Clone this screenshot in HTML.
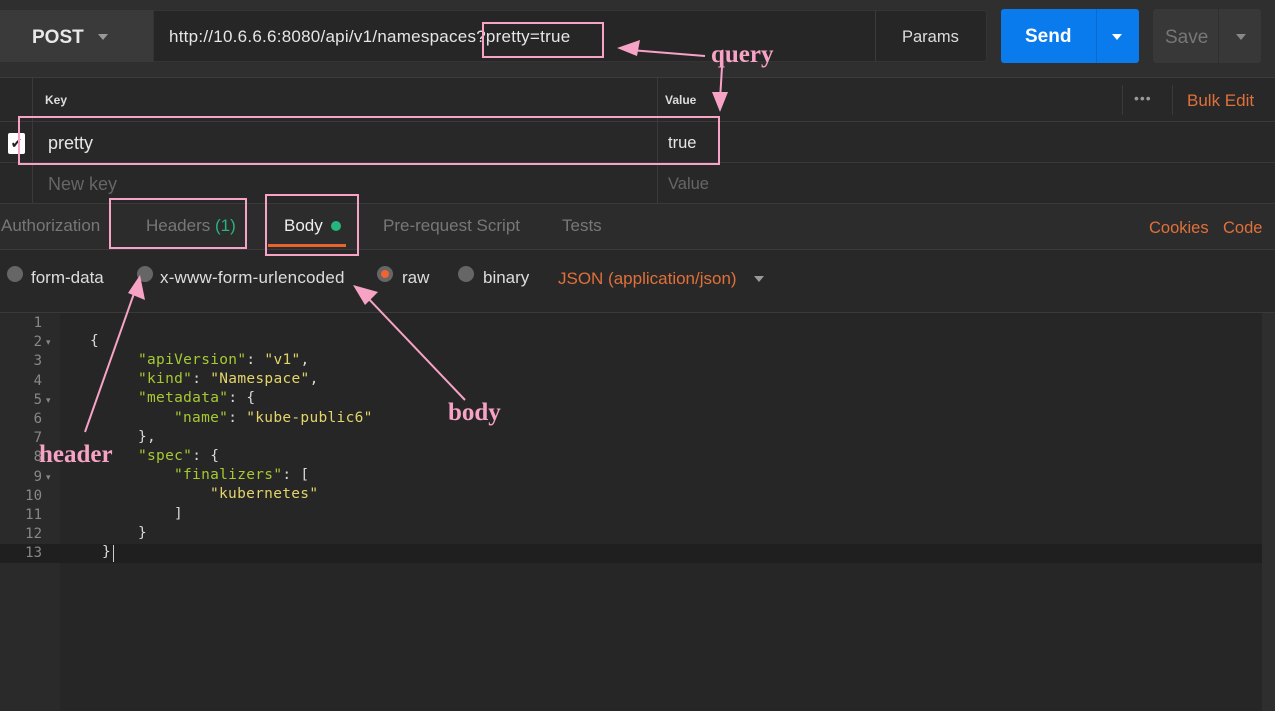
<!DOCTYPE html>
<html><head><meta charset="utf-8"><style>
*{margin:0;padding:0;box-sizing:border-box}
body{width:1275px;height:711px;background:#282828;font-family:"Liberation Sans","DejaVu Sans",sans-serif;position:relative;overflow:hidden;color:#ddd}
.a{position:absolute;white-space:nowrap}
.mono{font-family:"DejaVu Sans Mono","Liberation Mono",monospace;font-size:14px}
.c{position:absolute;font-family:"DejaVu Sans Mono","Liberation Mono",monospace;font-size:14.5px;color:#d8d8d8;white-space:pre;letter-spacing:0.3px}
.s{color:#a6c932}.v{color:#e3d46a}
.t{font-size:17px}
</style></head><body>
<div class="a" style="left:0;top:0;width:1275px;height:78px;background:#2f2f2f;border-bottom:1px solid #3c3c3c"></div>
<div class="a" style="left:0;top:10px;width:153px;height:52px;background:#3a3a3a"></div>
<div class="a" style="left:32px;top:27px;font-size:19px;font-weight:bold;color:#e8e8e8">POST</div>
<div class="a" style="left:98px;top:34px;border-left:5px solid transparent;border-right:5px solid transparent;border-top:6px solid #999"></div>
<div class="a" style="left:153px;top:10px;width:834px;height:52px;background:#262626;border:1px solid #343434;border-radius:0 3px 3px 0"></div>
<div class="a" style="left:169px;top:27px;font-size:17px;letter-spacing:0.25px;color:#e6e6e6">http://10.6.6.6:8080/api/v1/namespaces?pretty=true</div>
<div class="a" style="left:875px;top:10px;width:1px;height:52px;background:#3a3a3a"></div>
<div class="a" style="left:902px;top:28px;font-size:16.5px;color:#ddd">Params</div>
<div class="a" style="left:1001px;top:9px;width:138px;height:54px;background:#097bed;border-radius:3px"></div>
<div class="a" style="left:1096px;top:9px;width:1px;height:54px;background:#0a6ad0"></div>
<div class="a" style="left:1025px;top:26px;font-size:19px;font-weight:bold;color:#fff">Send</div>
<div class="a" style="left:1112px;top:34px;border-left:5px solid transparent;border-right:5px solid transparent;border-top:6px solid #fff"></div>
<div class="a" style="left:1153px;top:9px;width:108px;height:54px;background:#383838;border-radius:3px"></div>
<div class="a" style="left:1218px;top:9px;width:1px;height:54px;background:#2f2f2f"></div>
<div class="a" style="left:1165px;top:27px;font-size:19px;color:#777">Save</div>
<div class="a" style="left:1236px;top:34px;border-left:5px solid transparent;border-right:5px solid transparent;border-top:6px solid #888"></div>

<div class="a" style="left:0;top:121px;width:1275px;height:1px;background:#3a3a3a"></div>
<div class="a" style="left:0;top:162px;width:1275px;height:1px;background:#3a3a3a"></div>
<div class="a" style="left:0;top:203px;width:1275px;height:1px;background:#3a3a3a"></div>
<div class="a" style="left:32px;top:78px;width:1px;height:125px;background:#3a3a3a"></div>
<div class="a" style="left:657px;top:78px;width:1px;height:125px;background:#3a3a3a"></div>
<div class="a" style="left:1122px;top:85px;width:1px;height:30px;background:#3a3a3a"></div>
<div class="a" style="left:1172px;top:85px;width:1px;height:30px;background:#3a3a3a"></div>
<div class="a" style="left:45px;top:93px;font-size:12px;font-weight:bold;color:#ddd">Key</div>
<div class="a" style="left:665px;top:93px;font-size:12px;font-weight:bold;color:#ddd">Value</div>
<div class="a" style="left:1134px;top:90px;font-size:14px;color:#999;letter-spacing:1px">•••</div>
<div class="a" style="left:1187px;top:91px;font-size:17px;color:#e0703a">Bulk Edit</div>
<div class="a" style="left:8px;top:133px;width:17px;height:21px;background:#fff;border-radius:2px;color:#222;font-size:14px;font-weight:bold;text-align:center;line-height:21px">✔</div>
<div class="a" style="left:48px;top:133px;font-size:18px;color:#e6e6e6">pretty</div>
<div class="a" style="left:668px;top:134px;font-size:16.5px;color:#e6e6e6">true</div>
<div class="a" style="left:48px;top:174px;font-size:18px;color:#666">New key</div>
<div class="a" style="left:668px;top:175px;font-size:16.5px;color:#666">Value</div>

<div class="a" style="left:0;top:204px;width:1275px;height:46px;background:#2c2c2c;border-bottom:1px solid #3a3a3a"></div>
<div class="a t" style="left:1px;top:216px;color:#777">Authorization</div>
<div class="a t" style="left:146px;top:216px;color:#777">Headers <span style="color:#26b47f">(1)</span></div>
<div class="a t" style="left:284px;top:216px;color:#eee">Body</div>
<div class="a" style="left:331px;top:221px;width:10px;height:10px;border-radius:50%;background:#26b47f"></div>
<div class="a" style="left:268px;top:244px;width:78px;height:3px;background:#e8642c"></div>
<div class="a t" style="left:383px;top:216px;color:#777">Pre-request Script</div>
<div class="a t" style="left:562px;top:216px;color:#777">Tests</div>
<div class="a" style="left:1149px;top:219px;font-size:16.5px;color:#e0703a">Cookies</div>
<div class="a" style="left:1223px;top:219px;font-size:16.5px;color:#e0703a">Code</div>

<div class="a" style="left:7px;top:266px;width:16px;height:16px;border-radius:50%;background:#666"></div>
<div class="a t" style="left:31px;top:268px;color:#ddd">form-data</div>
<div class="a" style="left:137px;top:266px;width:16px;height:16px;border-radius:50%;background:#666"></div>
<div class="a t" style="left:160px;top:268px;color:#ddd;letter-spacing:0.2px">x-www-form-urlencoded</div>
<div class="a" style="left:377px;top:266px;width:16px;height:16px;border-radius:50%;background:#666"></div>
<div class="a" style="left:381px;top:270px;width:8px;height:8px;border-radius:50%;background:#f06430"></div>
<div class="a t" style="left:402px;top:268px;color:#ddd">raw</div>
<div class="a" style="left:458px;top:266px;width:16px;height:16px;border-radius:50%;background:#666"></div>
<div class="a t" style="left:483px;top:268px;color:#ddd">binary</div>
<div class="a t" style="left:558px;top:269px;color:#e0703a">JSON (application/json)</div>
<div class="a" style="left:754px;top:276px;border-left:5px solid transparent;border-right:5px solid transparent;border-top:6px solid #999"></div>

<div class="a" style="left:0;top:312px;width:1275px;height:1px;background:#3a3a3a"></div>
<div class="a" style="left:0;top:313px;width:60px;height:398px;background:#2a2a2a"></div>
<div class="a" style="left:60px;top:313px;width:1215px;height:398px;background:#262626"></div>
<div class="a" style="left:0;top:544px;width:1262px;height:19px;background:#1f1f1f"></div>
<div class="a" style="left:1262px;top:313px;width:13px;height:398px;background:#2e2e2e"></div>
<div class="a mono" style="left:0;top:314px;width:42px;text-align:right;line-height:19.2px;color:#888">1<br>2<br>3<br>4<br>5<br>6<br>7<br>8<br>9<br>10<br>11<br>12<br>13</div>
<div class="a" style="left:46px;top:337px;font-size:9px;color:#888">▾</div>
<div class="a" style="left:46px;top:395px;font-size:9px;color:#888">▾</div>
<div class="a" style="left:46px;top:472px;font-size:9px;color:#888">▾</div>

<div class="c" style="left:90px;top:333px">{</div>
<div class="c" style="left:138px;top:352px"><span class="s">"apiVersion"</span>: <span class="v">"v1"</span>,</div>
<div class="c" style="left:138px;top:371px"><span class="s">"kind"</span>: <span class="v">"Namespace"</span>,</div>
<div class="c" style="left:138px;top:390px"><span class="s">"metadata"</span>: {</div>
<div class="c" style="left:174px;top:410px"><span class="s">"name"</span>: <span class="v">"kube-public6"</span></div>
<div class="c" style="left:138px;top:429px">},</div>
<div class="c" style="left:138px;top:448px"><span class="s">"spec"</span>: {</div>
<div class="c" style="left:174px;top:467px"><span class="s">"finalizers"</span>: [</div>
<div class="c" style="left:210px;top:486px"><span class="v">"kubernetes"</span></div>
<div class="c" style="left:174px;top:506px">]</div>
<div class="c" style="left:138px;top:525px">}</div>
<div class="c" style="left:102px;top:544px">}</div>
<div class="a" style="left:113px;top:545px;width:1px;height:17px;background:#ccc"></div>

<svg class="a" style="left:0;top:0" width="1275" height="711">
<g fill="none" stroke="#f7a3c6" stroke-width="2">
<rect x="483" y="23" width="120" height="34"/>
<rect x="19" y="117" width="700" height="47"/>
<rect x="110" y="199" width="136" height="49"/>
<rect x="266" y="195" width="92" height="60"/>
<line x1="705" y1="56" x2="630" y2="50"/>
<line x1="722" y1="67" x2="720" y2="100"/>
<line x1="85" y1="432" x2="137" y2="285"/>
<line x1="465" y1="400" x2="365" y2="295"/>
</g>
<g fill="#f7a3c6">
<polygon points="617,48 640,40 637,56"/>
<polygon points="720,112 712,92 728,92"/>
<polygon points="140,275 145,300 128,293"/>
<polygon points="353,285 378,292 365,305"/>
</g>
<g fill="#f7a3c6" font-family="Liberation Serif,serif" font-size="25" font-weight="bold">
<text x="711" y="62">query</text>
<text x="448" y="420">body</text>
<text x="39" y="462">header</text>
</g>
</svg>
</body></html>
